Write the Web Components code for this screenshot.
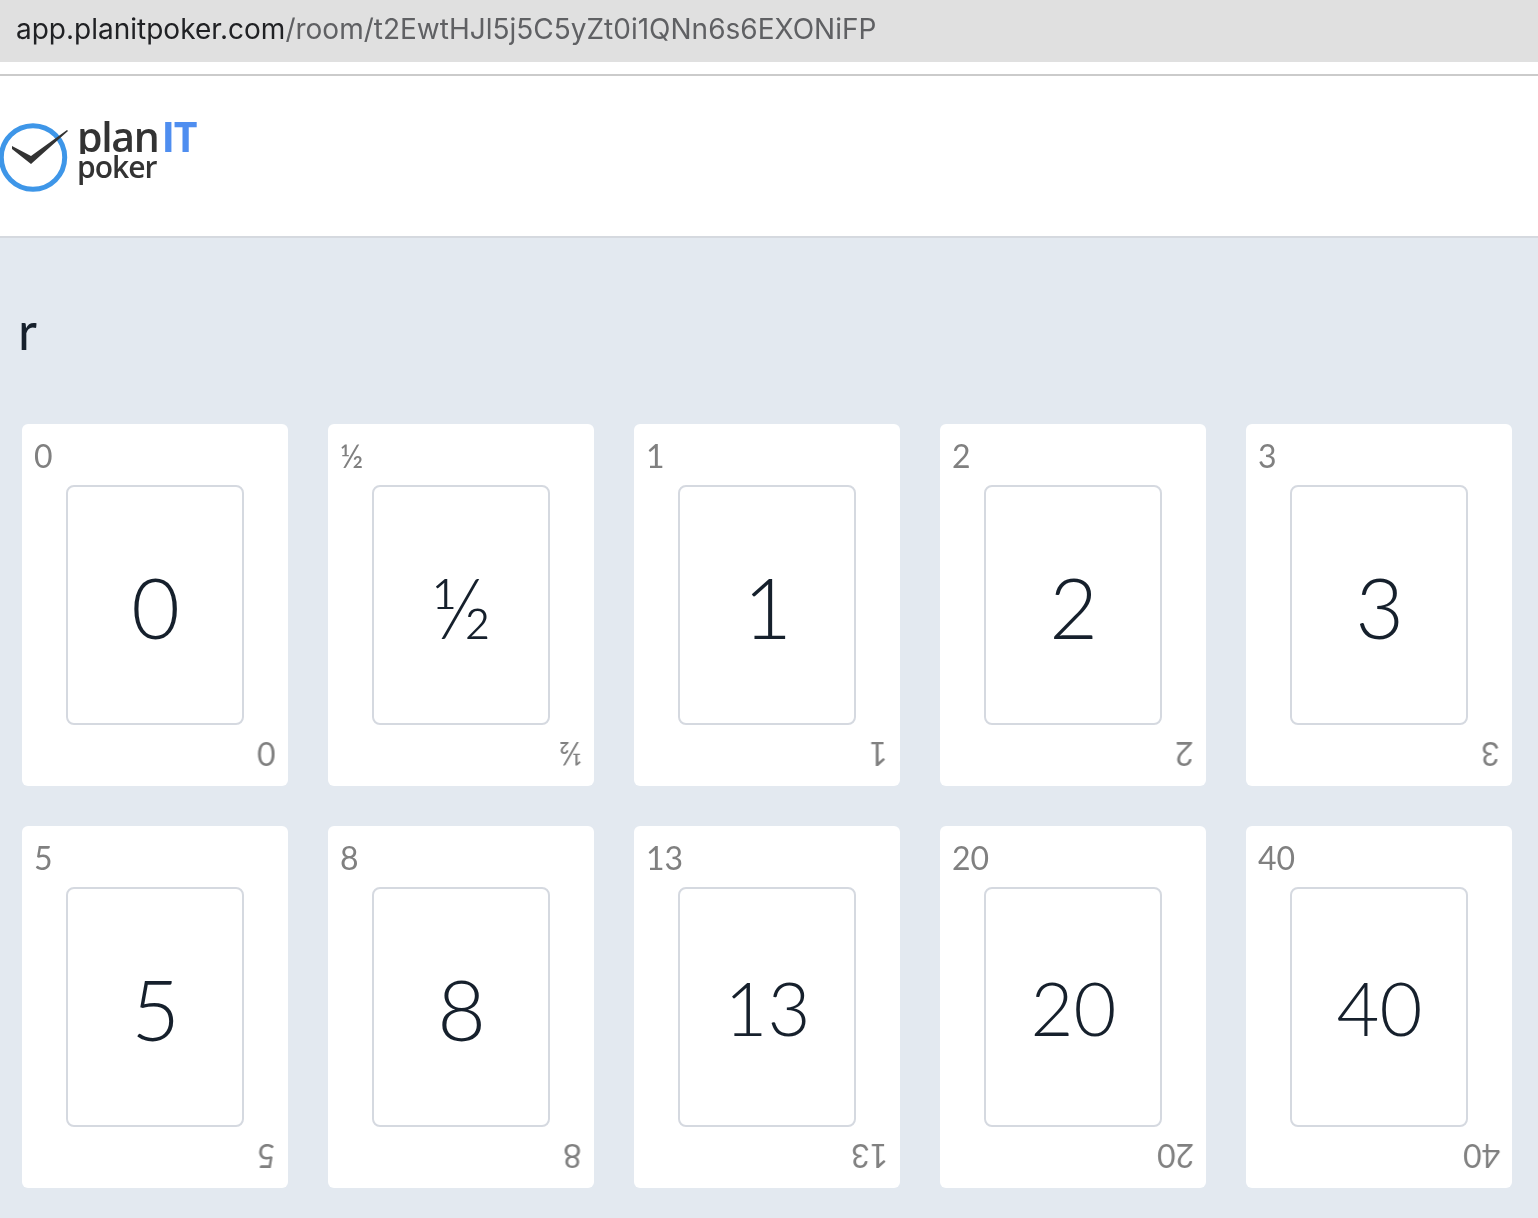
<!DOCTYPE html>
<html><head><meta charset="utf-8">
<style>html,body{margin:0;padding:0;background:#e3e9f0;}</style>
</head><body>
<url-bar>
<span slot="host">app.planitpoker.com</span><span slot="path">/room/t2EwtHJl5j5C5yZt0i1QNn6s6EXONiFP</span>
</url-bar>
<app-header></app-header>
<room-view name="r" cards="0,½,1,2,3,5,8,13,20,40"></room-view>
<script>
function def(name, html, init){
  customElements.define(name, class extends HTMLElement{
    connectedCallback(){
      if(!this.shadowRoot){
        this.attachShadow({mode:'open'}).innerHTML = html;
        if(init) init(this);
      }
    }
  });
}
def('url-bar', `<style>
:host{display:block;background:#fff;height:74px;}
.bar{height:62px;box-sizing:border-box;background:#e0e0e0;padding:10px 0 0 16px;font:28px/38px Inter,"Liberation Sans",sans-serif;white-space:nowrap;color:#5f6063;}
.txt{display:inline-block;will-change:transform;}
::slotted([slot=host]){color:#202124;}
</style><div class="bar"><div class="txt"><slot name="host"></slot><slot name="path"></slot></div></div>`);
def('app-header', `<style>
:host{display:block;background:#fff;height:160px;border-top:2px solid #cbcbcb;border-bottom:2px solid #d5d9df;}
.in{display:flex;align-items:flex-start;}
svg{display:block;margin-top:46px;flex:none;}
.t{margin:38px 0 0 9px;color:#333;font-family:"Open Sans",sans-serif;will-change:transform;}
.a{font-size:41px;font-weight:600;line-height:44px;letter-spacing:-1.3px;display:block;height:44px;white-space:nowrap;}
.a b{color:#4f8ef0;font-weight:700;letter-spacing:-1.5px;margin-left:3px;}
.b{position:relative;background:#fff;font-size:30px;font-weight:600;line-height:26px;letter-spacing:-1px;display:block;margin-top:-4px;}
</style><div class="in">
<svg width="68" height="72" viewBox="0 0 68 72"><circle cx="33" cy="35.5" r="31.7" fill="none" stroke="#3e96e8" stroke-width="5"/><path d="M12 24 L31 34 L67 8 L68 9 L31 42 L12 27 Z" fill="#333"/></svg>
<div class="t"><span class="a">plan<b>IT</b></span><span class="b">poker</span></div></div>`);
def('poker-card', `<style>
:host{display:block;position:relative;width:266px;height:362px;box-sizing:border-box;background:#fff;border-radius:6px;font-family:Lato,sans-serif;}
.c{position:absolute;left:12px;top:13px;font-size:32px;line-height:38px;color:#808080;will-change:transform;}
.c.r{left:auto;top:auto;right:12px;bottom:13px;transform:rotate(180deg);}
.m{position:absolute;left:44px;top:61px;width:178px;height:240px;box-sizing:border-box;border:2px solid #d5d9e0;border-radius:8px;display:flex;align-items:center;justify-content:center;padding:var(--p,4px) 0 0 1px;font-size:var(--s,84px);font-weight:300;color:#16202c;line-height:1;will-change:transform;}
</style><div class="c"><slot></slot></div><div class="m" id="m"></div><div class="c r" id="r"></div>`, el=>{
  const m = el.shadowRoot.getElementById('m');
  m.textContent = el.textContent;
  if(el.textContent.length>1){ m.style.setProperty('--s','74px'); m.style.setProperty('--p','2px'); }
  el.shadowRoot.getElementById('r').textContent = el.textContent;
});
def('room-view', `<style>
:host{display:block;padding:62px 26px 30px 22px;background:#e3e9f0;}
h1{margin:0 0 64px -4px;font:400 52px/60px Lato,sans-serif;color:#16202c;will-change:transform;}
.g{display:grid;grid-template-columns:repeat(5,266px);gap:40px;}
</style><h1 id="h"></h1><div class="g" id="g"></div>`, el=>{
  el.shadowRoot.getElementById('h').textContent = el.getAttribute('name');
  const g = el.shadowRoot.getElementById('g');
  el.getAttribute('cards').split(',').forEach(v=>{
    const c = document.createElement('poker-card');
    c.textContent = v;
    g.appendChild(c);
  });
});
</script>
</body></html>
